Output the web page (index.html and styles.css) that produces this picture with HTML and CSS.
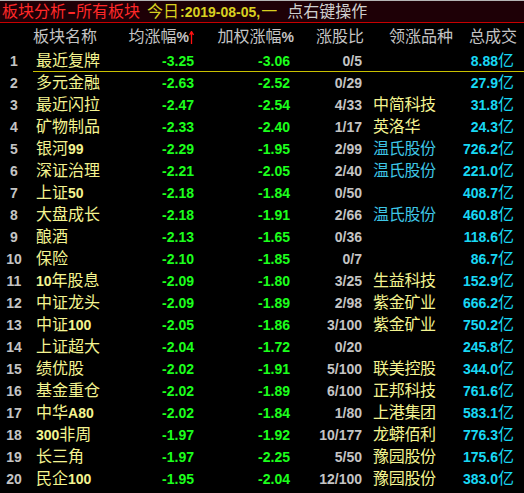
FILE: index.html
```html
<!DOCTYPE html>
<html lang="zh">
<head>
<meta charset="utf-8">
<title>板块分析</title>
<link rel="stylesheet" href="styles.css">
</head>
<body>
<div class="titlebar">
  <span class="t-red">板块分析<span class="dash">-</span>所有板块</span>
  <span class="t-yel">今日<b class="num">:2019-08-05,</b>一</span>
  <span class="t-gray">点右键操作</span>
</div>
<div class="grid head">
  <div class="h-name">板块名称</div>
  <div class="h-avg">均涨幅<b class="num">%</b><svg class="arrow" width="5" height="13" viewBox="0 0 5 13"><path d="M2.5 1 V13 M0.5 4 L2.5 0.5 L4.5 4" stroke="#ff1010" stroke-width="1.3" fill="none"/></svg></div>
  <div class="h-w">加权涨幅<b class="num">%</b></div>
  <div class="h-ratio">涨股比</div>
  <div class="h-lead">领涨品种</div>
  <div class="h-tot">总成交</div>
</div>
<div class="rows">
  <div class="grid row first"><span class="idx">1</span><span class="name">最近复牌</span><span class="g">-3.25</span><span class="g">-3.06</span><span class="r">0/5</span><span class="lead"></span><span class="tot"><b>8.88</b>亿</span></div>
  <div class="grid row"><span class="idx">2</span><span class="name">多元金融</span><span class="g">-2.63</span><span class="g">-2.52</span><span class="r">0/29</span><span class="lead"></span><span class="tot"><b>27.9</b>亿</span></div>
  <div class="grid row"><span class="idx">3</span><span class="name">最近闪拉</span><span class="g">-2.47</span><span class="g">-2.54</span><span class="r">4/33</span><span class="lead">中简科技</span><span class="tot"><b>31.8</b>亿</span></div>
  <div class="grid row"><span class="idx">4</span><span class="name">矿物制品</span><span class="g">-2.33</span><span class="g">-2.40</span><span class="r">1/17</span><span class="lead">英洛华</span><span class="tot"><b>24.3</b>亿</span></div>
  <div class="grid row"><span class="idx">5</span><span class="name">银河<b>99</b></span><span class="g">-2.29</span><span class="g">-1.95</span><span class="r">2/99</span><span class="lead blue">温氏股份</span><span class="tot"><b>726.2</b>亿</span></div>
  <div class="grid row"><span class="idx">6</span><span class="name">深证治理</span><span class="g">-2.21</span><span class="g">-2.05</span><span class="r">2/40</span><span class="lead blue">温氏股份</span><span class="tot"><b>221.0</b>亿</span></div>
  <div class="grid row"><span class="idx">7</span><span class="name">上证<b>50</b></span><span class="g">-2.18</span><span class="g">-1.84</span><span class="r">0/50</span><span class="lead"></span><span class="tot"><b>408.7</b>亿</span></div>
  <div class="grid row"><span class="idx">8</span><span class="name">大盘成长</span><span class="g">-2.18</span><span class="g">-1.91</span><span class="r">2/66</span><span class="lead blue">温氏股份</span><span class="tot"><b>460.8</b>亿</span></div>
  <div class="grid row"><span class="idx">9</span><span class="name">酿酒</span><span class="g">-2.13</span><span class="g">-1.65</span><span class="r">0/36</span><span class="lead"></span><span class="tot"><b>118.6</b>亿</span></div>
  <div class="grid row"><span class="idx">10</span><span class="name">保险</span><span class="g">-2.10</span><span class="g">-1.85</span><span class="r">0/7</span><span class="lead"></span><span class="tot"><b>86.7</b>亿</span></div>
  <div class="grid row"><span class="idx">11</span><span class="name"><b>10</b>年股息</span><span class="g">-2.09</span><span class="g">-1.80</span><span class="r">3/25</span><span class="lead">生益科技</span><span class="tot"><b>152.9</b>亿</span></div>
  <div class="grid row"><span class="idx">12</span><span class="name">中证龙头</span><span class="g">-2.09</span><span class="g">-1.89</span><span class="r">2/98</span><span class="lead">紫金矿业</span><span class="tot"><b>666.2</b>亿</span></div>
  <div class="grid row"><span class="idx">13</span><span class="name">中证<b>100</b></span><span class="g">-2.05</span><span class="g">-1.86</span><span class="r">3/100</span><span class="lead">紫金矿业</span><span class="tot"><b>750.2</b>亿</span></div>
  <div class="grid row"><span class="idx">14</span><span class="name">上证超大</span><span class="g">-2.04</span><span class="g">-1.72</span><span class="r">0/20</span><span class="lead"></span><span class="tot"><b>245.8</b>亿</span></div>
  <div class="grid row"><span class="idx">15</span><span class="name">绩优股</span><span class="g">-2.02</span><span class="g">-1.91</span><span class="r">5/100</span><span class="lead">联美控股</span><span class="tot"><b>344.0</b>亿</span></div>
  <div class="grid row"><span class="idx">16</span><span class="name">基金重仓</span><span class="g">-2.02</span><span class="g">-1.89</span><span class="r">6/100</span><span class="lead">正邦科技</span><span class="tot"><b>761.6</b>亿</span></div>
  <div class="grid row"><span class="idx">17</span><span class="name">中华<b>A80</b></span><span class="g">-2.02</span><span class="g">-1.84</span><span class="r">1/80</span><span class="lead">上港集团</span><span class="tot"><b>583.1</b>亿</span></div>
  <div class="grid row"><span class="idx">18</span><span class="name"><b>300</b>非周</span><span class="g">-1.97</span><span class="g">-1.92</span><span class="r">10/177</span><span class="lead">龙蟒佰利</span><span class="tot"><b>776.3</b>亿</span></div>
  <div class="grid row"><span class="idx">19</span><span class="name">长三角</span><span class="g">-1.97</span><span class="g">-2.25</span><span class="r">5/50</span><span class="lead">豫园股份</span><span class="tot"><b>175.6</b>亿</span></div>
  <div class="grid row"><span class="idx">20</span><span class="name">民企<b>100</b></span><span class="g">-1.95</span><span class="g">-2.04</span><span class="r">12/100</span><span class="lead">豫园股份</span><span class="tot"><b>383.0</b>亿</span></div>
</div>
</body>
</html>
```

FILE: styles.css
```css
html, body {
  margin: 0;
  padding: 0;
  background: #000;
}
body {
  width: 524px;
  height: 493px;
  overflow: hidden;
  font-family: "Liberation Sans", "Noto Sans CJK SC", sans-serif;
  font-size: 16px;
}
b, .num {
  font-weight: bold;
  font-size: 14px;
  font-family: "Liberation Sans", sans-serif;
}

.titlebar {
  height: 21px;
  border-top: 1px solid #b4b4b4;
  border-bottom: 1px solid #c80000;
  background: #1e0006;
  display: flex;
  align-items: center;
  padding-left: 2px;
  white-space: nowrap;
  line-height: 21px;
}
.t-red { color: #ff2828; }
.t-red .dash { display: inline-block; width: 9px; margin: 0 0.5px; text-align: center; font-weight: bold; transform: scaleX(1.6); }
.t-yel { color: #d8d020; margin-left: 7px; }
.t-yel .num { margin: 0 1px 0 1px; }
.t-gray { color: #cfcfcf; margin-left: 10px; }

.grid {
  display: grid;
  grid-template-columns: 28px 102px 64px 96px 72px 88px 64px 10px;
  align-items: center;
}

.head {
  height: 27px;
  color: #c4c4c4;
  line-height: 20px;
  white-space: nowrap;
}
.head > div { padding-top: 1px; }
.h-name { grid-column: 2; padding-left: 5px; }
.h-avg { grid-column: 3; justify-self: end; display: flex; align-items: center; }
.h-w { grid-column: 4; justify-self: end; margin-right: -4px; }
.h-ratio { grid-column: 5; justify-self: end; margin-right: -2px; }
.h-lead { grid-column: 6; padding-left: 27px; }
.h-tot { grid-column: 7; justify-self: end; margin-right: -3px; }

.row {
  height: 22px;
  line-height: 22px;
  white-space: nowrap;
}
.row.first {
  box-sizing: border-box;
  position: relative;
}
.row.first::after {
  content: "";
  position: absolute;
  left: 33px;
  right: 0;
  bottom: 0;
  height: 1px;
  background: #c8c000;
}

.idx {
  text-align: center;
  color: #c4c4c4;
  font-weight: bold;
  font-size: 14px;
}
.name {
  padding-left: 8px;
  color: #f4f490;
}
.name b { color: #f4f490; }
.g {
  text-align: right;
  color: #1cff1c;
  font-weight: bold;
  font-size: 14px;
}
.r {
  text-align: right;
  color: #c4c4c4;
  font-weight: bold;
  font-size: 14px;
}
.lead {
  padding-left: 11px;
  color: #f4f490;
  letter-spacing: -0.3px;
}
.lead.blue { color: #3ec6e6; }
.tot {
  text-align: right;
  color: #18d8f4;
}
.tot b { color: #18d8f4; }
```
